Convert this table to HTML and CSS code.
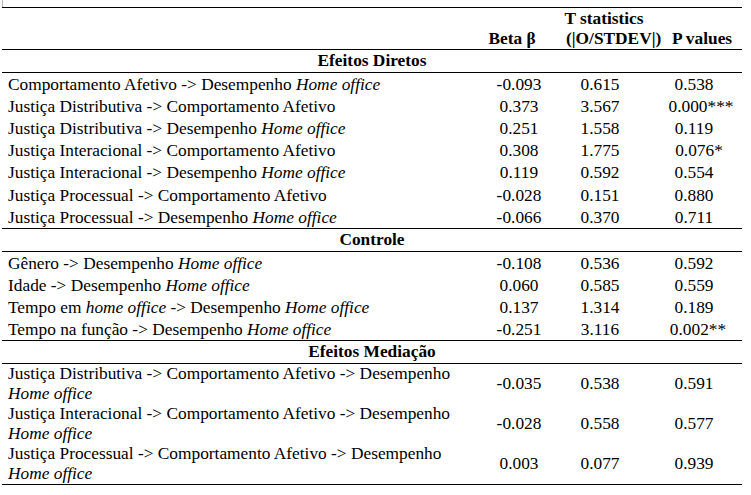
FILE: index.html
```html
<!DOCTYPE html>
<html>
<head>
<meta charset="utf-8">
<link rel="stylesheet" href="styles.css">
</head>
<body>
<div class="page">
  <div class="crop-edge"></div>
  <table class="results">
    <colgroup>
      <col class="c-path">
      <col class="c-beta">
      <col class="c-t">
      <col class="c-p">
    </colgroup>
    <thead>
      <tr class="head-top">
        <th></th>
        <th></th>
        <th class="h-tstat">T statistics</th>
        <th></th>
      </tr>
      <tr class="head-bottom">
        <th></th>
        <th class="h-beta">Beta β</th>
        <th class="h-stdev">(|O/STDEV|)</th>
        <th class="h-p">P values</th>
      </tr>
    </thead>
    <tbody>
      <tr class="section"><td colspan="4">Efeitos Diretos</td></tr>
      <tr class="row"><td class="path">Comportamento Afetivo -&gt; Desempenho <i>Home office</i></td><td class="beta">-0.093</td><td class="tval">0.615</td><td class="pval">0.538</td></tr>
      <tr class="row"><td class="path">Justiça Distributiva -&gt; Comportamento Afetivo</td><td class="beta">0.373</td><td class="tval">3.567</td><td class="pval star3">0.000***</td></tr>
      <tr class="row"><td class="path">Justiça Distributiva -&gt; Desempenho <i>Home office</i></td><td class="beta">0.251</td><td class="tval">1.558</td><td class="pval">0.119</td></tr>
      <tr class="row"><td class="path">Justiça Interacional -&gt; Comportamento Afetivo</td><td class="beta">0.308</td><td class="tval">1.775</td><td class="pval star1">0.076*</td></tr>
      <tr class="row"><td class="path">Justiça Interacional -&gt; Desempenho <i>Home office</i></td><td class="beta">0.119</td><td class="tval">0.592</td><td class="pval">0.554</td></tr>
      <tr class="row"><td class="path">Justiça Processual -&gt; Comportamento Afetivo</td><td class="beta">-0.028</td><td class="tval">0.151</td><td class="pval">0.880</td></tr>
      <tr class="row"><td class="path">Justiça Processual -&gt; Desempenho <i>Home office</i></td><td class="beta">-0.066</td><td class="tval">0.370</td><td class="pval">0.711</td></tr>
      <tr class="section"><td colspan="4">Controle</td></tr>
      <tr class="row"><td class="path">Gênero -&gt; Desempenho <i>Home office</i></td><td class="beta">-0.108</td><td class="tval">0.536</td><td class="pval">0.592</td></tr>
      <tr class="row"><td class="path">Idade -&gt; Desempenho <i>Home office</i></td><td class="beta">0.060</td><td class="tval">0.585</td><td class="pval">0.559</td></tr>
      <tr class="row"><td class="path">Tempo em <i>home office</i> -&gt; Desempenho <i>Home office</i></td><td class="beta">0.137</td><td class="tval">1.314</td><td class="pval">0.189</td></tr>
      <tr class="row"><td class="path">Tempo na função -&gt; Desempenho <i>Home office</i></td><td class="beta">-0.251</td><td class="tval">3.116</td><td class="pval star2">0.002**</td></tr>
      <tr class="section"><td colspan="4">Efeitos Mediação</td></tr>
      <tr class="med"><td class="path">Justiça Distributiva -&gt; Comportamento Afetivo -&gt; Desempenho <i>Home office</i></td><td class="beta">-0.035</td><td class="tval">0.538</td><td class="pval">0.591</td></tr>
      <tr class="med"><td class="path">Justiça Interacional -&gt; Comportamento Afetivo -&gt; Desempenho <i>Home office</i></td><td class="beta">-0.028</td><td class="tval">0.558</td><td class="pval">0.577</td></tr>
      <tr class="med med-last"><td class="path">Justiça Processual -&gt; Comportamento Afetivo -&gt; Desempenho <i>Home office</i></td><td class="beta">0.003</td><td class="tval">0.077</td><td class="pval">0.939</td></tr>
    </tbody>
  </table>
</div>
</body>
</html>
```
FILE: styles.css
```css
html, body {
  margin: 0;
  padding: 0;
  background: #ffffff;
}

body {
  font-family: "Liberation Serif", "DejaVu Serif", serif;
  font-size: 17.33px;
  color: #000000;
}

.page {
  width: 751px;
  height: 495px;
  padding-left: 2px;
  box-sizing: border-box;
}

.crop-edge {
  height: 7px;
  width: 0;
  border-left: 1px solid #b4b4b4;
}

.results {
  width: 740px;
  border-collapse: collapse;
  table-layout: fixed;
}

.c-path { width: 472px; }
.c-beta { width: 80px; }
.c-t { width: 100px; }
.c-p { width: 88px; }

.results th,
.results td {
  padding: 0;
  line-height: 20px;
  vertical-align: middle;
}

.results th {
  font-weight: bold;
  text-align: center;
  white-space: nowrap;
}

.head-top th {
  border-top: 1px solid #000;
  padding-top: 1px;
}

.head-bottom th {
  padding-bottom: 0;
}

.results th.h-beta { padding-right: 4px; }
.results th.h-stdev {
  text-align: left;
  padding-left: 12px;
}
.results th.h-p { padding-left: 8px; }

.section td {
  text-align: center;
  font-weight: bold;
  border-top: 1px solid #000;
  border-bottom: 1px solid #000;
  padding: 1px 0;
}

.row td {
  padding-top: 2.1px;
}

.results td.path {
  padding-left: 6px;
  padding-right: 10px;
  text-align: left;
}

.results td.beta {
  text-align: center;
  padding-left: 10px;
}

.results td.tval {
  text-align: center;
  padding-right: 8px;
}

.results td.pval {
  text-align: center;
  padding-right: 8px;
}

.results td.star3 { padding-left: 14px; }
.results td.star1 { padding-left: 10px; }
.results td.star2 { padding-left: 8px; }

.med-last td {
  border-bottom: 1px solid #000;
}
```
